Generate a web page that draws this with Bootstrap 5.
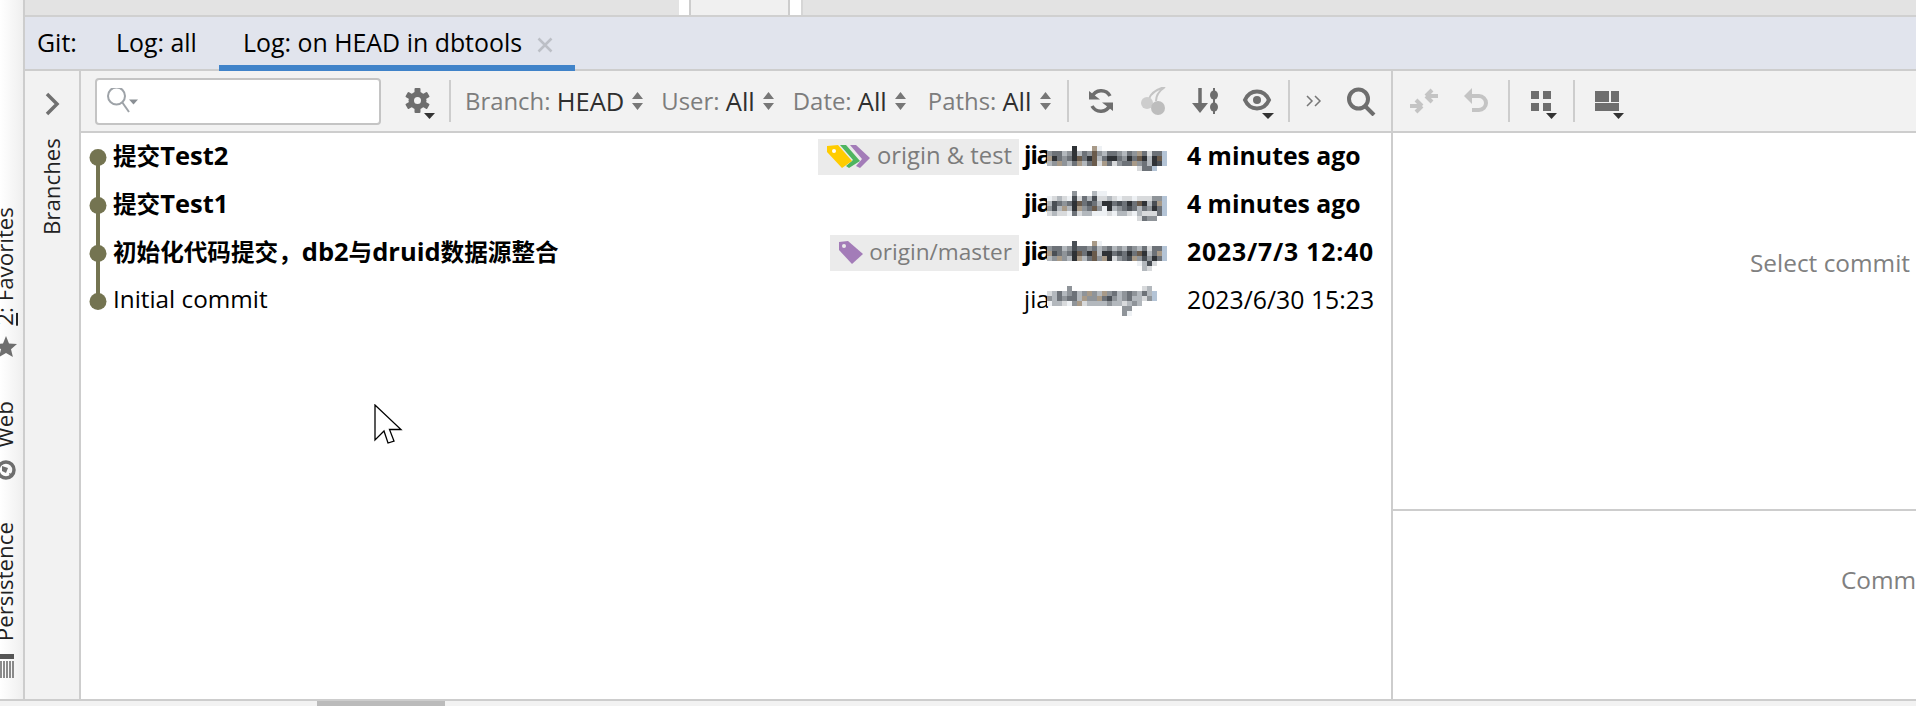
<!DOCTYPE html>
<html lang="en">
<head>
    <meta charset="UTF-8">
    <title>Git Log</title>
    <link href="https://cdn.jsdelivr.net/npm/bootstrap@5.3.2/dist/css/bootstrap.min.css" rel="stylesheet">
    <style>
        html, body { height: 100%; overflow: hidden; }
        body {
            font-family: "Open Sans", "Noto Sans CJK SC", sans-serif;
            font-size: 22.300px;
            color: #000;
            background: #fff;
        }
        svg { display: block; flex-shrink: 0; }

        .ide-shell { height: 706px; }
        .ide-main { height: 699px; }
        .ide-hscroll { height: 7px; background: #f2f2f2; border-top: 2px solid #cdcdcd; padding-left: 317px; }
        .ide-thumb { width: 128px; height: 5px; background: #bbb; }

        .side-stripe {
            width: 25px;
            background: linear-gradient(90deg, #fff, #efefef);
            border-right: 2px solid #cdcdcd;
            padding-top: 207px;
            overflow: hidden;
        }
        .stripe-item {
            writing-mode: vertical-rl;
            transform: rotate(180deg);
            white-space: nowrap;
            line-height: 30px;
            width: 30px;
            margin-left: -10px;
            color: #222;
        }
        .web-item { margin-top: 42px; }
        .persist-item { margin-top: 40px; }
        .star-icon { margin: 9px 0 0 -3px; }
        .globe-icon { margin: 11px 0 0 -1px; }
        .list-icon { margin: 11px 0 0 0; }

        .top-strip { height: 17px; background: #e3e3e3; border-bottom: 2px solid #d0d0d0; }
        .top-gap { width: 10px; background: #fff; }
        .top-gap.first { margin-left: 654px; }
        .top-gap.last { width: 13px; border-right: 2px solid #d6d6d6; }
        .top-tab { width: 101px; background: #f0f0f0; border-left: 2px solid #cdcdcd; border-right: 2px solid #cdcdcd; }

        .tool-tabs { height: 54px; background: #e1e4ed; border-bottom: 2px solid #cdcdcd; font-size: 24.900px; }
        .tool-tab { height: 54px; line-height: 51px; white-space: nowrap; }
        .tab-git { margin-left: 12px; width: 79px; }
        .tab-all { width: 103px; }
        .tab-active { width: 356px; padding-left: 24px; border-bottom: 6px solid #4083c9; }
        .tab-close { margin: 20px 0 0 15px; }

        .branch-rail { width: 56px; background: #f2f2f2; border-right: 2px solid #cdcdcd; }
        .branch-arrow { margin: 21px 0 0 20px; }
        .branch-label {
            writing-mode: vertical-rl;
            transform: rotate(180deg);
            line-height: 30px;
            margin: 22px 0 0 12px;
            color: #222;
        }

        .log-panel { width: 1310px; }
        .tool-row { height: 62px; background: #f2f2f2; border-bottom: 2px solid #cdcdcd; font-size: 23.900px; }
        .search-box {
            width: 286px;
            height: 47px;
            margin-left: 14px;
            background: #fff;
            border: 2px solid #c4c4c4;
            border-radius: 4px;
            padding-left: 10px;
        }
        .gear-btn { margin-left: 24px; }
        .gear-sep { margin-left: 13px; }
        .tool-sep { width: 2px; height: 42px; background: #cdcdcd; }
        .filter-item { white-space: nowrap; color: #7d7d7d; margin-left: 18px; }
        .filter-item.first { margin-left: 14px; }
        .filter-item.date-filter { margin-left: 19px; }
        .filter-item.paths-filter { margin-left: 22px; }
        .filter-item b { font-size: 25.500px; font-weight: 400; color: #2f2f2f; }
        .sort-arrows { margin-left: 8px; }
        .ml-sep-a { margin-left: 16px; }
        .ml-refresh { margin-left: 19px; }
        .ml-cherry { margin-left: 27px; }
        .ml-sort { margin-left: 24px; }
        .ml-eye { margin-left: 22px; }
        .ml-sep-b { margin-left: 13px; }
        .ml-more { margin-left: 16px; }
        .ml-find { margin-left: 25px; }
        .ml-merge { margin-left: 16px; }
        .ml-undo { margin-left: 24px; }
        .ml-sep-c { margin-left: 19px; }
        .ml-grid { margin-left: 15px; }
        .ml-sep-d { margin-left: 16px; }
        .ml-layout { margin-left: 20px; }

        .commit-row { height: 48px; font-size: 24.300px; }
        .commit-row.is-new { font-weight: 700; }
        .commit-row.is-new .commit-subject { font-size: 25.500px; }
        .commit-subject { white-space: nowrap; padding-bottom: 3px; }
        .cjk-run { font-size: 23.600px; }
        .ref-pill {
            height: 36px;
            padding: 0 7px 0 9px;
            background: #ebebeb;
            color: #7c7c7c;
            font-size: 22.600px;
            font-weight: 400;
            margin-right: 5px;
            white-space: nowrap;
        }
        .ref-text { padding-bottom: 2px; }
        .multi-text { margin-left: 7px; font-size: 23.800px; }
        .single-text { margin-left: 6px; }
        .commit-author { width: 163px; }
        .author-head { width: 23px; padding-bottom: 3px; }
        .is-new .author-head { letter-spacing: -1px; }
        .commit-date { width: 204px; white-space: nowrap; font-size: 24.800px; padding-bottom: 3px; }
        .commit-date.wide-date { letter-spacing: .8px; }

        .detail-panel { width: 525px; border-left: 2px solid #cdcdcd; }
        .detail-top { height: 378px; border-bottom: 2px solid #cdcdcd; padding: 114px 0 0 357px; }
        .detail-bottom { padding: 53px 0 0 448px; }
        .detail-hint { color: #808080; font-size: 24.400px; line-height: 32px; white-space: nowrap; }

        .mouse-pointer { position: absolute; left: 374px; top: 404px; }
    </style>
</head>
<body>
<div class="ide-shell d-flex flex-column">
    <div class="ide-main d-flex">
        <div class="side-stripe d-flex flex-column">
            <div class="stripe-item"><u>2</u>: Favorites</div>
            <svg class="star-icon" width="24" height="24" viewBox="0 0 24 24"><path d="M9 1l3 7.500 8 .6-6 5.200 1.900 7.700L9 18l-6.900 4 1.900-7.700-6-5.200 8-.6z" fill="#6e6e6e"/></svg>
            <div class="stripe-item web-item">Web</div>
            <svg class="globe-icon" width="24" height="24" viewBox="0 0 24 24"><circle cx="7" cy="12" r="8" fill="none" stroke="#6e6e6e" stroke-width="3.500"/><path d="M3 8l6 2-2 5-4-2zM10 15l3 1-2 3z" fill="#6e6e6e"/></svg>
            <div class="stripe-item persist-item">Persistence</div>
            <svg class="list-icon" width="24" height="26" viewBox="0 0 24 26"><path d="M0 1h14v5H0z" fill="#555"/><path d="M1 8v17M4 8v17M7 8v17M10 8v17M13 8v17" stroke="#666" stroke-width="1.500"/></svg>
        </div>

        <div class="flex-grow-1 d-flex flex-column">
            <div class="top-strip d-flex">
                <div class="top-gap first"></div>
                <div class="top-tab"></div>
                <div class="top-gap last"></div>
            </div>
            <div class="tool-tabs d-flex">
                <div class="tool-tab tab-git">Git:</div>
                <div class="tool-tab tab-all">Log: all</div>
                <div class="tool-tab tab-active d-flex">
                    <span>Log: on HEAD in dbtools</span>
                    <svg class="tab-close" width="16" height="16" viewBox="0 0 16 16"><path d="M1.500 1.500l13 13M14.500 1.500l-13 13" stroke="#bcbfc6" stroke-width="2.500"/></svg>
                </div>
            </div>

            <div class="flex-grow-1 d-flex">
                <div class="branch-rail">
                    <svg class="branch-arrow" width="16" height="24" viewBox="0 0 16 24"><path d="M2 2l10 10-10 10" fill="none" stroke="#707070" stroke-width="3.500"/></svg>
                    <div class="branch-label">Branches</div>
                </div>

                <div class="log-panel d-flex flex-column">
                    <div class="tool-row d-flex align-items-center">
                        <div class="search-box d-flex align-items-center">
                            <svg width="32" height="26" viewBox="0 0 32 26"><circle cx="9.500" cy="8" r="8.500" fill="none" stroke="#9ea3a8" stroke-width="2"/><path d="M15 14l7 10" stroke="#9ea3a8" stroke-width="2"/><path d="M22 11.500h9l-4.500 5z" fill="#8a8f94"/></svg>
                        </div>
                        <svg class="gear-btn" width="31" height="36" viewBox="0 0 31 36">
                            <g fill="#6e6e6e"><rect x="9.500" y="5" width="6" height="25" rx="1"/><rect x="9.500" y="5" width="6" height="25" rx="1" transform="rotate(60 12.500 17.500)"/><rect x="9.500" y="5" width="6" height="25" rx="1" transform="rotate(120 12.500 17.500)"/></g>
                            <circle cx="12.500" cy="17.500" r="9" fill="#6e6e6e"/><circle cx="12.500" cy="17.500" r="3.500" fill="#f2f2f2"/>
                            <path d="M19 30h11l-5.500 6z" fill="#333"/>
                        </svg>
                        <div class="tool-sep gear-sep"></div>
                        <div class="filter-item first d-flex align-items-center">Branch:&nbsp;<b>HEAD</b>
                            <svg class="sort-arrows" width="11" height="20" viewBox="0 0 11 20"><path d="M0 8l5.500-7L11 8zM0 12l5.500 7 5.500-7z" fill="#777"/></svg>
                        </div>
                        <div class="filter-item d-flex align-items-center">User:&nbsp;<b>All</b>
                            <svg class="sort-arrows" width="11" height="20" viewBox="0 0 11 20"><path d="M0 8l5.500-7L11 8zM0 12l5.500 7 5.500-7z" fill="#777"/></svg>
                        </div>
                        <div class="filter-item date-filter d-flex align-items-center">Date:&nbsp;<b>All</b>
                            <svg class="sort-arrows" width="11" height="20" viewBox="0 0 11 20"><path d="M0 8l5.500-7L11 8zM0 12l5.500 7 5.500-7z" fill="#777"/></svg>
                        </div>
                        <div class="filter-item paths-filter d-flex align-items-center">Paths:&nbsp;<b>All</b>
                            <svg class="sort-arrows" width="11" height="20" viewBox="0 0 11 20"><path d="M0 8l5.500-7L11 8zM0 12l5.500 7 5.500-7z" fill="#777"/></svg>
                        </div>
                        <div class="tool-sep ml-sep-a"></div>
                        <svg class="ml-refresh" width="26" height="26" viewBox="0 0 26 26"><path d="M4 9a10 10 0 0 1 18-1M22 17a10 10 0 0 1-18 1" fill="none" stroke="#6e6e6e" stroke-width="3.500"/><path d="M1 3l11 8.500H1zM25 23l-11-8.500h11z" fill="#6e6e6e"/></svg>
                        <svg class="ml-cherry" width="26" height="28" viewBox="0 0 26 28"><path d="M8 12C10 6 16 2 24 0M15 14c0-6 3-10 9-14" fill="none" stroke="#c4c4c4" stroke-width="2"/><circle cx="6" cy="16" r="6" fill="#cdcdcd"/><circle cx="17" cy="21" r="7" fill="#bdbdbd"/></svg>
                        <svg class="ml-sort" width="28" height="26" viewBox="0 0 28 26"><path d="M9 0v18" stroke="#6e6e6e" stroke-width="3.500"/><path d="M1 15h16l-8 10z" fill="#6e6e6e"/><path d="M23 0v26" stroke="#6e6e6e" stroke-width="2"/><ellipse cx="23" cy="7" rx="4" ry="4.500" fill="#6e6e6e"/><ellipse cx="23" cy="19" rx="4" ry="4.500" fill="#6e6e6e"/></svg>
                        <svg class="ml-eye" width="34" height="36" viewBox="0 0 34 36"><path d="M16 8.500c6 0 10 4 12 8.500-2 4.500-6 8.500-12 8.500S6 21.500 4 17c2-4.500 6-8.500 12-8.500z" fill="none" stroke="#6e6e6e" stroke-width="4"/><circle cx="16" cy="17" r="4" fill="#6e6e6e"/><path d="M21 30h12l-6 6z" fill="#333"/></svg>
                        <div class="tool-sep ml-sep-b"></div>
                        <svg class="ml-more" width="16" height="12" viewBox="0 0 16 12"><path d="M1 1l5 5-5 5M9 1l5 5-5 5" fill="none" stroke="#777" stroke-width="1.500"/></svg>
                        <svg class="ml-find" width="30" height="30" viewBox="0 0 30 30"><circle cx="11.500" cy="13" r="9.500" fill="none" stroke="#6e6e6e" stroke-width="4"/><path d="M18 20l9 9" stroke="#6e6e6e" stroke-width="4"/></svg>
                    </div>
                    <div id="commitList"></div>
                </div>

                <div class="detail-panel d-flex flex-column">
                    <div class="tool-row d-flex align-items-center">
                        <svg class="ml-merge" width="30" height="32" viewBox="0 0 30 32"><path d="M17 11h12M17 11l6-6M17 11l6 6M1 21h12M13 21l-6-6M13 21l-6 6" fill="none" stroke="#c4c4c4" stroke-width="4"/></svg>
                        <svg class="ml-undo" width="26" height="28" viewBox="0 0 26 28"><path d="M4 9h12a6.500 6.500 0 0 1 0 14H9" fill="none" stroke="#c4c4c4" stroke-width="4"/><path d="M9 1v16L1 9z" fill="#c4c4c4"/></svg>
                        <div class="tool-sep ml-sep-c"></div>
                        <svg class="ml-grid" width="32" height="36" viewBox="0 0 32 36"><path d="M6 8h8v8H6zM18 8h8v8h-8zM6 20h8v8H6zM18 20h8v8h-8z" fill="#6e6e6e"/><path d="M21 30h11l-5.500 6z" fill="#333"/></svg>
                        <div class="tool-sep ml-sep-d"></div>
                        <svg class="ml-layout" width="34" height="36" viewBox="0 0 34 36"><path d="M0 8h14v11H0zM16 8h8v11h-8zM0 20h24v8H0z" fill="#6e6e6e"/><path d="M18 30h11l-5.500 6z" fill="#333"/></svg>
                    </div>
                    <div class="detail-top"><div class="detail-hint">Select commit</div></div>
                    <div class="detail-bottom flex-grow-1"><div class="detail-hint">Comm</div></div>
                </div>
            </div>
        </div>
    </div>
    <div class="ide-hscroll"><div class="ide-thumb"></div></div>
</div>

<svg class="mouse-pointer" width="30" height="44" viewBox="0 0 30 44"><path d="M1 1v35l9-9 4 12 6-2-4.500-11.500H27z" fill="#fff" stroke="#000" stroke-width="1.300"/></svg>

<script>
    const MOSAIC_COLORS = {
        j: '#2f3236', a: '#4a4f55', b: '#6d7278', c: '#8f9499', d: '#b3b8bd', e: '#d8dadc',
        f: '#eef1f4', g: '#a89a88', h: '#6a5b4c', i: '#b4c4d6'
    };
    const MOSAIC_A = [
        '.....j...gf.............',
        'cbbdcjdbchcdbbcdbcgbebbi',
        'gjbcbjhbjhdbjjbcjbhjdjhi',
        'dcgcdbgdbhegbecbbgcbdjai',
        '..................ebbi..'
    ];
    const MOSAIC_B = [
        '.....c...dff............',
        'fedefaebdaeedefeefeeecci',
        'dabcbjhbabdjjbabjbhjdagi',
        'cadgdjgcbhcfjdcbabdbcjbi',
        'edeefbeddfffefddefdeeebi',
        '..................ebcc..'
    ];
    const MOSAIC_C = [
        '.....a...gf.............',
        'cbbdcabbcbdcbdcdbcdbebbi',
        'gabcbjhbjhdjjbabjbhjdbgi',
        'dcgcdjgdbhcgjecbagcacjbi',
        '..................fdae..',
        '...................de...'
    ];
    const MOSAIC_D = [
        '....c..............ed...',
        'edbdcbdcgcdgcbdcbcdbdi..',
        'cdbcbbdgccgbacdcbddeci..',
        'fddefcgeddddcddedcd.....',
        '...............cc.......',
        '...............cf.......'
    ];
    const COMMITS = [
        {subject: '提交Test2', ref: 'multi', mosaic: MOSAIC_A, dy: 13, date: '4 minutes ago', isNew: true},
        {subject: '提交Test1', mosaic: MOSAIC_B, dy: 10, date: '4 minutes ago', isNew: true},
        {subject: '初始化代码提交\uff0cdb2与druid数据源整合', ref: 'master', mosaic: MOSAIC_C, dy: 12, date: '2023/7/3 12:40', wideDate: true, isNew: true},
        {subject: 'Initial commit', mosaic: MOSAIC_D, dy: 9, date: '2023/6/30 15:23', isNew: false}
    ];

    function refHtml(ref) {
        if (ref === 'multi') {
            return `<div class="ref-pill d-flex align-items-center">
                <svg width="43" height="24" viewBox="0 0 43 24">
                    <path d="M23 0h6l14 13-10 10-4-2 6-7z" fill="#a37cb8"/>
                    <path d="M13 0h6l14 16-11 7-3-2 7-6z" fill="#4eb560"/>
                    <path d="M0 1l11-1 14 16-10 7L0 7z" fill="#ffcc00"/><circle cx="7" cy="6" r="2" fill="#fff"/>
                </svg><span class="ref-text multi-text">origin &amp; test</span></div>`;
        }
        if (ref === 'master') {
            return `<div class="ref-pill d-flex align-items-center">
                <svg width="24" height="24" viewBox="0 0 24 24">
                    <path d="M0 1l9-1 15 13-11 10L0 9z" fill="#a37cb8"/><circle cx="5" cy="5" r="2" fill="#ebebeb"/>
                </svg><span class="ref-text single-text">origin/master</span></div>`;
        }
        return '';
    }

    function mosaicSvg(rows, dy) {
        let rects = '';
        rows.forEach((row, y) => {
            [...row].forEach((ch, x) => {
                if (MOSAIC_COLORS[ch]) {
                    rects += `<rect x="${x * 5}" y="${dy + y * 5}" width="5" height="5" fill="${MOSAIC_COLORS[ch]}"/>`;
                }
            });
        });
        return `<svg width="120" height="48" viewBox="0 0 120 48">${rects}</svg>`;
    }

    function graphSvg(i) {
        const top = i === 0 ? 24 : 0;
        const bottom = i === COMMITS.length - 1 ? 24 : 48;
        return `<svg width="32" height="48" viewBox="0 0 32 48">
            <path d="M17 ${top}V${bottom}" stroke="#747451" stroke-width="4"/>
            <circle cx="17" cy="24.500" r="8.500" fill="#747451"/></svg>`;
    }

    function subjectHtml(text) {
        return text.replace(/[\u4e00-\u9fff\uff0c]+/g, m => `<span class="cjk-run">${m}</span>`);
    }

    document.getElementById('commitList').innerHTML = COMMITS.map((c, i) => `
        <div class="commit-row d-flex align-items-center ${c.isNew ? 'is-new' : ''}">
            ${graphSvg(i)}
            <div class="commit-subject flex-grow-1">${subjectHtml(c.subject)}</div>
            ${refHtml(c.ref)}
            <div class="commit-author d-flex align-items-center"><span class="author-head">jia</span>${mosaicSvg(c.mosaic, c.dy)}</div>
            <div class="commit-date ${c.wideDate ? 'wide-date' : ''}">${c.date}</div>
        </div>`).join('');
</script>
<script src="https://cdn.jsdelivr.net/npm/bootstrap@5.3.2/dist/js/bootstrap.bundle.min.js"></script>
</body>
</html>
